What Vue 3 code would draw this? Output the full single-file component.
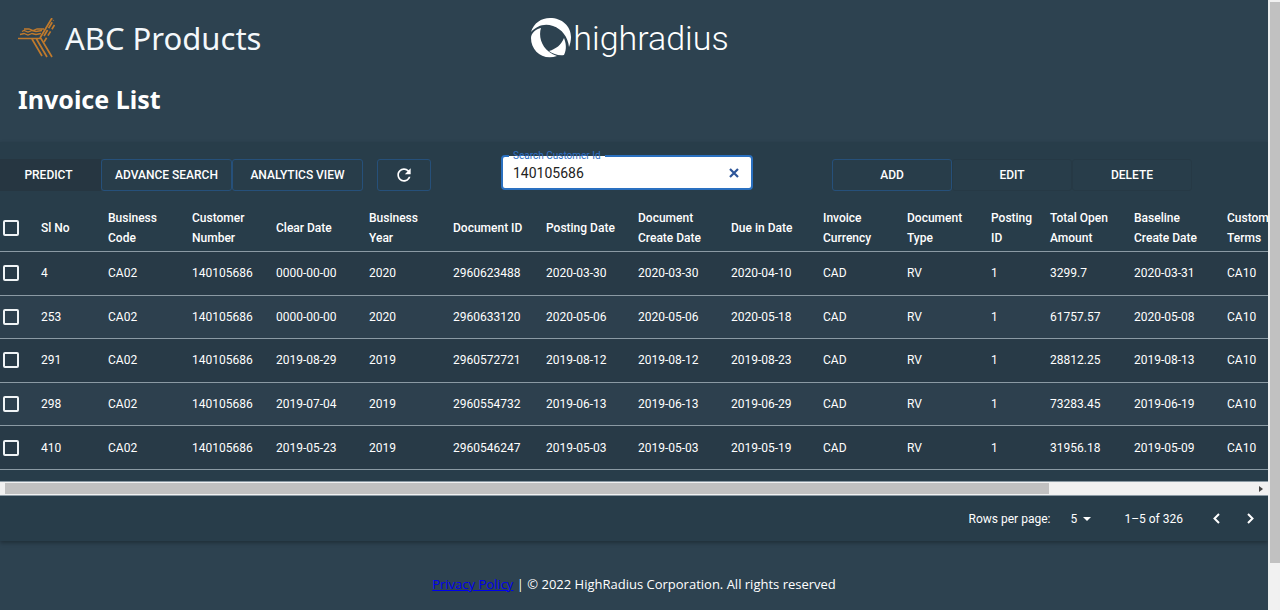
<script setup>
import { ref } from 'vue'

const search = ref('140105686')
const rowsPerPage = ref('5')

const columns = [
  { lines: ['Sl No'], width: 67 },
  { lines: ['Business', 'Code'], width: 84 },
  { lines: ['Customer', 'Number'], width: 84 },
  { lines: ['Clear Date'], width: 93 },
  { lines: ['Business', 'Year'], width: 84 },
  { lines: ['Document ID'], width: 93 },
  { lines: ['Posting Date'], width: 92 },
  { lines: ['Document', 'Create Date'], width: 93 },
  { lines: ['Due in Date'], width: 92 },
  { lines: ['Invoice', 'Currency'], width: 84 },
  { lines: ['Document', 'Type'], width: 84 },
  { lines: ['Posting', 'ID'], width: 59 },
  { lines: ['Total Open', 'Amount'], width: 84 },
  { lines: ['Baseline', 'Create Date'], width: 93 },
  { lines: ['Customer', 'Terms'], width: 84 },
]

const rows = [
  ['4', 'CA02', '140105686', '0000-00-00', '2020', '2960623488', '2020-03-30', '2020-03-30', '2020-04-10', 'CAD', 'RV', '1', '3299.7', '2020-03-31', 'CA10'],
  ['253', 'CA02', '140105686', '0000-00-00', '2020', '2960633120', '2020-05-06', '2020-05-06', '2020-05-18', 'CAD', 'RV', '1', '61757.57', '2020-05-08', 'CA10'],
  ['291', 'CA02', '140105686', '2019-08-29', '2019', '2960572721', '2019-08-12', '2019-08-12', '2019-08-23', 'CAD', 'RV', '1', '28812.25', '2019-08-13', 'CA10'],
  ['298', 'CA02', '140105686', '2019-07-04', '2019', '2960554732', '2019-06-13', '2019-06-13', '2019-06-29', 'CAD', 'RV', '1', '73283.45', '2019-06-19', 'CA10'],
  ['410', 'CA02', '140105686', '2019-05-23', '2019', '2960546247', '2019-05-03', '2019-05-03', '2019-05-19', 'CAD', 'RV', '1', '31956.18', '2019-05-09', 'CA10'],
]
</script>

<template>
  <div class="window">
    <div class="page">
      <header class="brand-bar">
        <div class="brand">
          <svg class="brand-mark" viewBox="0 0 37 40" fill="none" stroke="#c07a2c" stroke-width="1.7">
            <path d="M0 20.500h23L34 39M14 21l10 17M18.500 21l10.500 18M22 20L34 0" />
            <path d="M2 16.500l4-1 4 1.500 4-1.500 4 1 5-1M4 13.500l2-1 4 1.500 4-1.500 4 1 6-1M6 11h5l4 1.500 4-1.500h7" stroke-width="1.300" />
            <path d="M26 18l9.500-16" stroke-dasharray="7 2" />
            <path d="M26 24l10.500-17" stroke-dasharray="5 2.500" />
          </svg>
          <span class="brand-name">ABC Products</span>
        </div>
        <div class="vendor">
          <svg class="vendor-mark" viewBox="0 0 40 40" fill="#fff">
            <path d="M0 14C3 5 10 0 19 0c12 0 21 8 21 19 0 4-1 7-2 10-1-10-7-18-16-21C13 5 6 8 0 14z" />
            <path d="M10 10C7 19 11 33 26 38 12 43 0 33 0 20c0-5 5-9 10-10z" />
            <path d="M33 20c2 5 3 11 0 17-5 1-11-1-15-4 7-2 12-6 15-13z" />
          </svg>
          <span class="vendor-name">highradius</span>
        </div>
      </header>
      <h1>Invoice List</h1>

      <main class="panel">
        <div class="toolbar">
          <div class="group">
            <button class="btn predict">PREDICT</button>
            <button class="btn outlined wide">ADVANCE SEARCH</button>
            <button class="btn outlined wide">ANALYTICS VIEW</button>
            <button class="btn outlined refresh" aria-label="Refresh">
              <svg viewBox="0 0 24 24" width="20" height="20" fill="#fff">
                <path d="M17.65 6.35C16.2 4.9 14.21 4 12 4c-4.42 0-7.99 3.58-7.99 8s3.57 8 7.99 8c3.73 0 6.84-2.55 7.73-6h-2.08c-.82 2.33-3.04 4-5.65 4-3.31 0-6-2.69-6-6s2.69-6 6-6c1.66 0 3.14.69 4.22 1.78L13 11h7V4l-2.35 2.35z" />
              </svg>
            </button>
          </div>
          <div class="search">
            <label for="customer">Search Customer Id</label>
            <input id="customer" v-model="search" type="text" />
            <button class="clear" aria-label="Clear" @click="search = ''">
              <svg viewBox="0 0 10 10" width="10" height="10" stroke="#2d5599" stroke-width="2.2">
                <path d="M1 1l8 8M9 1L1 9" />
              </svg>
            </button>
          </div>
          <div class="group">
            <button class="btn outlined action">ADD</button>
            <button class="btn disabled action">EDIT</button>
            <button class="btn disabled action">DELETE</button>
          </div>
        </div>

        <div class="table-wrap">
          <table>
            <colgroup>
              <col class="check-col" />
              <col v-for="(c, i) in columns" :key="i" :style="{ width: c.width + 'px' }" />
            </colgroup>
            <thead>
              <tr>
                <th class="check"><input type="checkbox" aria-label="Select all rows" /></th>
                <th v-for="(c, i) in columns" :key="i">
                  <div v-for="line in c.lines" :key="line">{{ line }}</div>
                </th>
              </tr>
            </thead>
            <tbody>
              <tr v-for="row in rows" :key="row[0]">
                <td class="check"><input type="checkbox" :aria-label="'Select row ' + row[0]" /></td>
                <td v-for="(cell, i) in row" :key="i">{{ cell }}</td>
              </tr>
            </tbody>
          </table>
        </div>

        <div class="hscroll">
          <div class="hthumb"></div>
          <svg viewBox="0 0 4 6" width="4" height="6" fill="#444"><path d="M0 0l4 3-4 3z" /></svg>
        </div>

        <div class="pagination">
          <label for="rows">Rows per page:</label>
          <div class="rows-select">
            <select id="rows" v-model="rowsPerPage">
              <option>5</option>
              <option>10</option>
            </select>
            <svg viewBox="0 0 8 4" width="8" height="4" fill="#fff"><path d="M0 0h8L4 4z" /></svg>
          </div>
          <span class="range">1–5 of 326</span>
          <button class="page-btn" aria-label="Previous page">
            <svg viewBox="0 0 7 11" width="7" height="11"><path d="M6 1L1.500 5.500 6 10" /></svg>
          </button>
          <button class="page-btn" aria-label="Next page">
            <svg viewBox="0 0 7 11" width="7" height="11"><path d="M1 1l4.500 4.500L1 10" /></svg>
          </button>
        </div>
      </main>

      <footer><a href="#">Privacy Policy</a> | © 2022 HighRadius Corporation. All rights reserved</footer>
    </div>
    <div class="vscroll"><div class="vthumb"></div></div>
  </div>
</template>

<style>
body {
  margin: 0;
  background: #2d4250;
}
</style>

<style scoped>
* {
  box-sizing: border-box;
}
.window {
  display: flex;
  min-height: 100vh;
  color: #fff;
  background: #2d4250;
  font-family: Roboto, "Liberation Sans", sans-serif;
  font-size: 12px;
}
.page {
  flex: 1;
  min-width: 0;
}
.brand-bar {
  display: grid;
  grid-template-columns: 1fr auto 1fr;
  height: 76px;
  padding: 0 26px 0 18px;
  align-items: center;
}
.brand,
.vendor {
  display: flex;
  align-items: center;
}
.brand {
  gap: 10px;
}
.brand-mark {
  width: 37px;
  height: 40px;
}
.brand-name {
  font: 31px/40px "Noto Sans", sans-serif;
  color: #f4f8fb;
}
.vendor {
  gap: 2px;
}
.vendor-mark {
  width: 40px;
  height: 40px;
}
.vendor-name {
  font-size: 34px;
  font-weight: 300;
  line-height: 40px;
}
h1 {
  margin: 0;
  height: 66px;
  padding: 5px 18px 0;
  font: 700 25px/36px "Noto Sans", sans-serif;
}
.panel {
  background: #283d4a;
  box-shadow: 0 2px 4px rgba(0, 0, 0, 0.3);
}
.toolbar {
  display: grid;
  grid-template-columns: 501fr 331fr 436fr;
  height: 63px;
  padding-top: 13px;
  align-items: start;
}
.group {
  display: flex;
  padding-top: 4px;
}
button {
  padding: 0;
  border: 0;
  background: none;
  color: #fff;
  font: inherit;
}
.btn {
  display: flex;
  align-items: center;
  justify-content: center;
  height: 32px;
  border-radius: 3px;
  font-weight: 500;
}
.outlined {
  border: 1px solid #26507a;
}
.predict {
  width: 101px;
  padding-right: 4px;
  border-radius: 0;
  background: #263641;
}
.wide {
  width: 131px;
}
.refresh {
  width: 54px;
  margin-left: 14px;
}
.action {
  width: 120px;
}
.disabled {
  border: 1px solid #263945;
}
.search {
  position: relative;
  width: 252px;
}
.search label {
  position: absolute;
  top: -6px;
  left: 8px;
  padding: 0 4px;
  font-size: 10px;
  line-height: 14px;
  color: #2f6fc4;
  background: linear-gradient(#283d4a 50%, #fff 50%);
}
.search input {
  display: block;
  width: 100%;
  height: 35px;
  padding: 0 40px 0 10px;
  border: 2px solid #2a70c0;
  border-radius: 4px;
  outline: 0;
  background: #fff;
  color: #222;
  font: 14px/20px Roboto, sans-serif;
}
.clear {
  position: absolute;
  top: 9px;
  right: 10px;
  display: grid;
  place-items: center;
  width: 18px;
  height: 18px;
}
.table-wrap {
  height: 276px;
  overflow: hidden;
}
table {
  width: 1292px;
  table-layout: fixed;
  border-collapse: separate;
  border-spacing: 0;
}
.check-col {
  width: 25px;
}
thead {
  height: 47px;
}
tbody {
  height: 218px;
}
th,
td {
  padding: 0 0 0 16px;
  border-bottom: 1px solid #8b9aa4;
  text-align: left;
  white-space: nowrap;
  font-weight: 500;
}
th {
  height: 47px;
  line-height: 20px;
}
td {
  height: 43px;
  line-height: 18px;
  font-weight: 400;
}
tbody tr:nth-child(odd) {
  background: #283a47;
}
tbody tr:nth-child(even) {
  background: #2d404e;
}
.check {
  padding: 0 0 0 3px;
}
.check input {
  display: block;
  appearance: none;
  width: 16px;
  height: 16px;
  margin: 0;
  border: 2px solid #f0f4f6;
  border-radius: 2px;
}
.hscroll {
  display: flex;
  align-items: center;
  justify-content: space-between;
  height: 15px;
  padding: 0 5px;
  border: 1px solid #8b9aa4;
  border-width: 1px 0;
  background: #f1f1f1;
}
.hthumb {
  width: 83%;
  height: 11px;
  background: #c1c1c1;
}
.pagination {
  display: flex;
  align-items: center;
  justify-content: flex-end;
  height: 45px;
  padding-right: 7px;
}
.rows-select {
  position: relative;
  display: flex;
  align-items: center;
  margin: 0 33px 0 20px;
}
select {
  appearance: none;
  width: 21px;
  padding: 0;
  border: 0;
  background: transparent;
  color: #fff;
  font: inherit;
}
.rows-select svg {
  position: absolute;
  right: 0;
  pointer-events: none;
}
.range {
  margin-right: 22px;
}
.page-btn {
  display: grid;
  place-items: center;
  width: 22px;
  height: 24px;
}
.page-btn + .page-btn {
  margin-left: 12px;
}
.page-btn path {
  fill: none;
  stroke: #fff;
  stroke-width: 2;
}
footer {
  padding-top: 33px;
  text-align: center;
  font: 13px/20px "Open Sans", "Noto Sans", sans-serif;
}
footer a {
  color: #0000ee;
}
.vscroll {
  flex: none;
  width: 12px;
  padding-top: 2px;
  border-left: 2px solid #f1f1f1;
  background: #f1f1f1;
}
.vthumb {
  height: 92vh;
  background: #c1c1c1;
}
</style>
